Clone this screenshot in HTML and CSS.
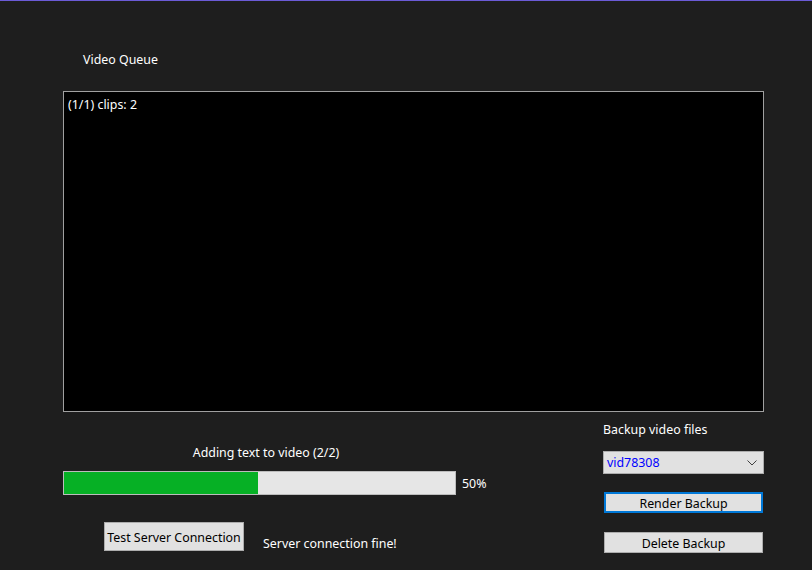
FILE: index.html
```html
<!DOCTYPE html>
<html>
<head>
<meta charset="utf-8">
<link rel="stylesheet" href="styles.css">
</head>
<body>
<div class="app">
  <div class="title">Video Queue</div>
  <div class="queue">
    <div class="queue-item">(1/1) clips: 2</div>
  </div>
  <div class="bottom">
    <div class="left">
      <div class="status">Adding text to video (2/2)</div>
      <div class="progress-row">
        <div class="progress"><div class="fill" style="width:49.7%"></div></div>
        <span class="pct">50%</span>
      </div>
      <div class="conn-row">
        <button class="btn test-btn">Test Server Connection</button>
        <span class="conn-msg">Server connection fine!</span>
      </div>
    </div>
    <div class="right">
      <div class="backup-label">Backup video files</div>
      <div class="combo">
        <span class="combo-val">vid78308</span>
        <svg class="chev" width="10" height="6" viewBox="0 0 10 6"><path d="M0.5 0.5 L5 5 L9.5 0.5" fill="none" stroke="#404040" stroke-width="1"/></svg>
      </div>
      <button class="btn side-btn focused">Render Backup</button>
      <button class="btn side-btn delete">Delete Backup</button>
    </div>
  </div>
</div>
</body>
</html>
```

FILE: styles.css
```css
html, body {
  margin: 0;
  padding: 0;
}
body {
  background: #1e1e1e;
  border-top: 1px solid #6b5bd6;
  height: 569px;
  overflow: hidden;
  font-family: "Noto Sans", "Liberation Sans", sans-serif;
  font-size: 12.4px;
  color: #ffffff;
}
.app {
  padding-left: 63px;
  width: 701px;
}
.title {
  margin-top: 51px;
  margin-left: 20px;
  line-height: 16px;
  height: 16px;
}
.queue {
  margin-top: 23px;
  height: 319px;
  width: 699px;
  background: #000;
  border: 1px solid #a0a0a0;
}
.queue-item {
  padding: 5px 0 0 4px;
  line-height: 16px;
}
.bottom {
  display: flex;
}
.left {
  width: 540px;
}
.status {
  margin-top: 33px;
  line-height: 16px;
  width: 406px;
  text-align: center;
}
.progress-row {
  margin-top: 10px;
  display: flex;
  align-items: center;
}
.progress {
  width: 391px;
  height: 22px;
  border: 1px solid #bcbcbc;
  background: #e6e6e6;
}
.fill {
  height: 100%;
  background: #06b025;
}
.pct {
  margin-left: 6px;
  line-height: 16px;
  padding-top: 2px;
}
.conn-row {
  margin-top: 27px;
  display: flex;
  align-items: flex-end;
}
.btn {
  font-family: inherit;
  font-size: 12.4px;
  color: #000;
  background: #e1e1e1;
  border: 1px solid #adadad;
  padding: 0;
  margin: 0;
  line-height: 16px;
}
.test-btn {
  margin-left: 41px;
  width: 140px;
  height: 29px;
  padding-top: 2px;
}
.conn-msg {
  margin-left: 19px;
  line-height: 16px;
  margin-bottom: -1px;
}
.right {
  width: 161px;
  display: flex;
  flex-direction: column;
}
.backup-label {
  margin-top: 10px;
  line-height: 16px;
}
.combo {
  margin-top: 13px;
  height: 21px;
  border: 1px solid #adadad;
  background: #e1e1e1;
  display: flex;
  align-items: center;
  justify-content: space-between;
  padding: 0 6px 0 3px;
}
.combo-val {
  color: #0000ff;
  line-height: 16px;
  padding-top: 1px;
}
.side-btn {
  margin-top: 18px;
  margin-left: 1px;
  width: 159px;
  height: 21px;
  padding-top: 2px;
}
.side-btn.delete {
  margin-top: 19px;
}
.side-btn.focused {
  border: 2px solid #0078d7;
}
```
